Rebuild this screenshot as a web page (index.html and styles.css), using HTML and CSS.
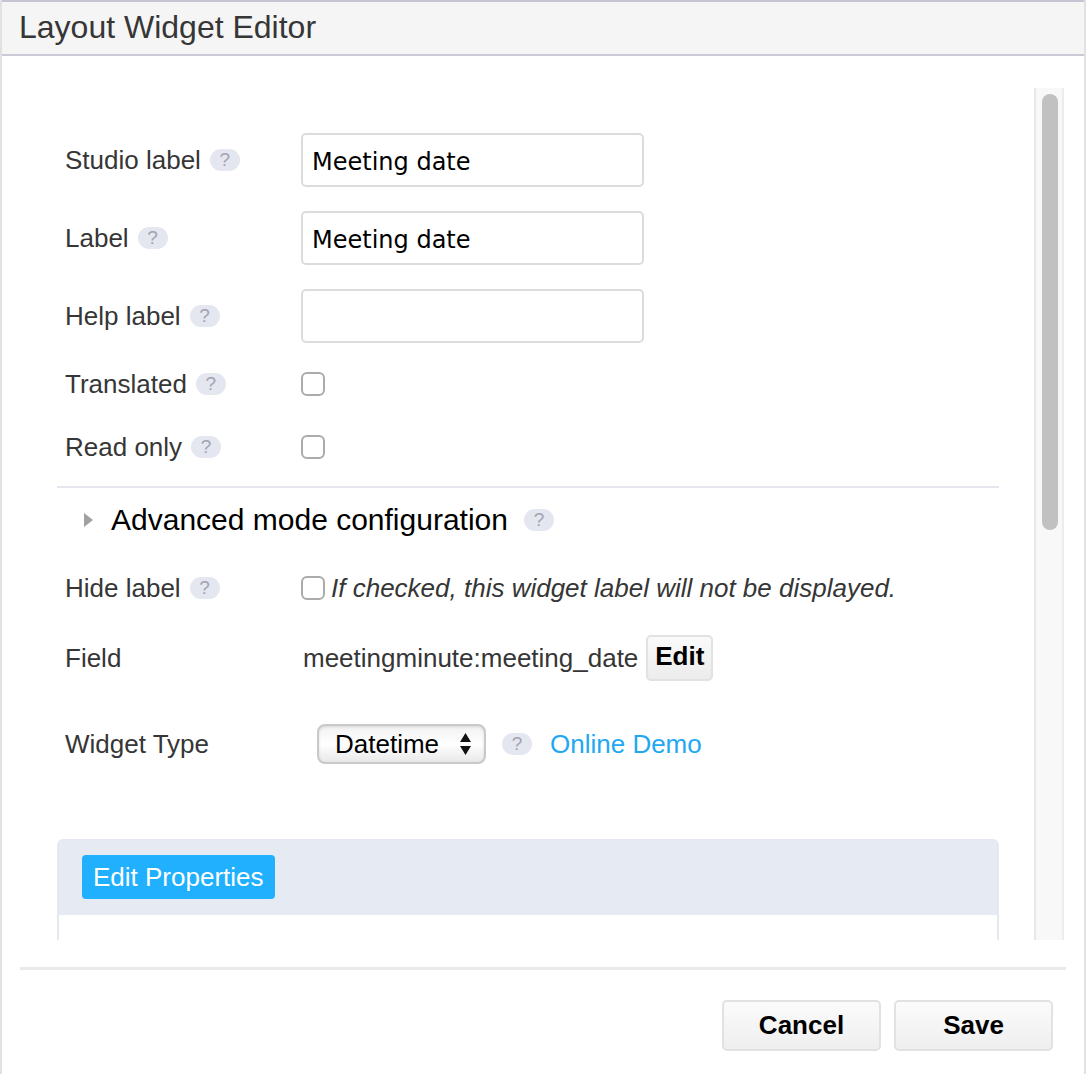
FILE: index.html
```html
<!DOCTYPE html>
<html>
<head>
<meta charset="utf-8">
<link rel="stylesheet" href="styles.css">
</head>
<body>
<div class="modal">
  <div class="modal-header"><h1 class="title">Layout Widget Editor</h1></div>
  <div class="modal-body">
    <div class="scroll-content">
      <div class="row row-input">
        <div class="lbl">Studio label <span class="help">?</span></div>
        <div class="input">Meeting date</div>
      </div>
      <div class="row row-input gap24">
        <div class="lbl">Label <span class="help">?</span></div>
        <div class="input">Meeting date</div>
      </div>
      <div class="row row-input gap24">
        <div class="lbl">Help label <span class="help">?</span></div>
        <div class="input"></div>
      </div>
      <div class="row row-check r-translated">
        <div class="lbl">Translated <span class="help">?</span></div>
        <span class="checkbox"></span>
      </div>
      <div class="row row-check r-readonly">
        <div class="lbl">Read only <span class="help">?</span></div>
        <span class="checkbox"></span>
      </div>
      <div class="divider"></div>
      <div class="advanced">
        <span class="caret"></span>
        <span class="adv-text">Advanced mode configuration</span>
        <span class="help">?</span>
      </div>
      <div class="row row-check r-hide">
        <div class="lbl">Hide label <span class="help">?</span></div>
        <span class="checkbox"></span>
        <span class="hint">If checked, this widget label will not be displayed.</span>
      </div>
      <div class="row r-field">
        <div class="lbl">Field</div>
        <span class="field-value">meetingminute:meeting_date</span>
        <span class="btn-edit">Edit</span>
      </div>
      <div class="row r-widget">
        <div class="lbl">Widget Type</div>
        <div class="select">
          <span class="select-text">Datetime</span>
          <svg class="select-arrows" width="13" height="24" viewBox="0 0 13 24"><path d="M6.5 1 L12 10 L1 10 Z" fill="#111"/><path d="M1 14 L12 14 L6.5 23 Z" fill="#111"/></svg>
        </div>
        <span class="help help-widget">?</span>
        <span class="link">Online Demo</span>
      </div>
      <div class="panel">
        <div class="panel-head"><span class="btn-blue">Edit Properties</span></div>
        <div class="panel-body"></div>
      </div>
    </div>
    <div class="scrollbar"><div class="thumb"></div></div>
  </div>
  <div class="modal-footer">
    <span class="btn">Cancel</span>
    <span class="btn">Save</span>
  </div>
</div>
</body>
</html>
```
FILE: styles.css
```css
html, body {
  margin: 0;
  padding: 0;
}
body {
  background: #e1e1e3;
  font-family: "Liberation Sans", Arial, sans-serif;
  width: 1086px;
  height: 1074px;
  overflow: hidden;
}
.modal {
  margin: 0 2px;
  width: 1082px;
  height: 1074px;
  background: #fff;
  border-top: 2px solid #c6c4d2;
  box-sizing: border-box;
  display: flex;
  flex-direction: column;
}
.modal-header {
  height: 54px;
  background: #f5f5f5;
  border-bottom: 2px solid #cbc9d6;
  box-sizing: border-box;
  display: flex;
  align-items: center;
  padding-left: 17px;
}
.title {
  margin: 0;
  font-weight: normal;
  font-size: 32px;
  color: #363636;
  position: relative;
  top: -1px;
}
.modal-body {
  display: flex;
  margin-top: 32px;
  height: 852px;
}
.scroll-content {
  width: 942px;
  margin-left: 55px;
  padding-top: 45px;
  overflow: hidden;
  height: 852px;
  box-sizing: border-box;
}
.row {
  display: flex;
  align-items: center;
}
.lbl {
  width: 244px;
  padding-left: 8px;
  box-sizing: border-box;
  font-size: 26px;
  color: #363636;
  display: flex;
  align-items: center;
  flex-shrink: 0;
}
.help {
  display: inline-flex;
  align-items: center;
  justify-content: center;
  width: 30px;
  height: 22px;
  border-radius: 11px;
  background: #e4e7f0;
  color: #a3a3b0;
  font-size: 19px;
  margin-left: 9px;
}
.row-input {
  height: 54px;
}
.gap24 {
  margin-top: 24px;
}
.input {
  width: 343px;
  height: 54px;
  box-sizing: border-box;
  border: 2px solid #dcdcdc;
  border-radius: 5px;
  padding: 3px 0 0 9px;
  display: flex;
  align-items: center;
  font-family: "DejaVu Sans", sans-serif;
  font-size: 24px;
  color: #000;
}
.row-check {
  height: 34px;
}
.r-translated { margin-top: 24px; }
.r-readonly { margin-top: 29px; }
.checkbox {
  width: 24px;
  height: 24px;
  box-sizing: border-box;
  border: 2px solid #ababab;
  border-radius: 6px;
  background: #fff;
  flex-shrink: 0;
}
.divider {
  margin-top: 22px;
  height: 2px;
  background: #e6e6ee;
}
.advanced {
  margin-top: 12px;
  height: 40px;
  display: flex;
  align-items: center;
  padding-left: 27px;
}
.caret {
  width: 0;
  height: 0;
  border-top: 7px solid transparent;
  border-bottom: 7px solid transparent;
  border-left: 9px solid #a0a0a0;
  margin-right: 18px;
}
.adv-text {
  font-size: 30px;
  color: #000;
}
.advanced .help {
  margin-left: 16px;
}
.r-hide {
  margin-top: 31px;
}
.hint {
  font-style: italic;
  font-size: 26px;
  color: #363636;
  margin-left: 6px;
  white-space: nowrap;
}
.r-field {
  margin-top: 30px;
  height: 46px;
}
.field-value {
  font-size: 26px;
  color: #363636;
  margin-left: 2px;
}
.btn-edit {
  margin-left: 8px;
  width: 67px;
  height: 46px;
  box-sizing: border-box;
  border: 2px solid #e2e2e2;
  border-radius: 5px;
  background: linear-gradient(#fafafa, #ececec);
  display: flex;
  align-items: center;
  justify-content: center;
  font-weight: bold;
  font-size: 26px;
  color: #000;
  padding-bottom: 4px;
}
.r-widget {
  margin-top: 43px;
  height: 40px;
}
.select {
  margin-left: 16px;
  width: 169px;
  height: 40px;
  box-sizing: border-box;
  border: 2px solid #c9c9c9;
  border-radius: 8px;
  background: linear-gradient(#f2f2f2, #ffffff 50%, #e9e9e9);
  box-shadow: inset 0 1px 3px rgba(0,0,0,0.12);
  display: flex;
  align-items: center;
  padding-left: 16px;
  padding-right: 12px;
  justify-content: space-between;
}
.select-text {
  font-size: 26px;
  color: #000;
}
.help-widget {
  margin-left: 16px;
}
.link {
  margin-left: 18px;
  font-size: 26px;
  color: #22a8f2;
}
.panel {
  margin-top: 75px;
  border: 2px solid #e4e8f0;
  border-bottom: none;
  border-radius: 6px 6px 0 0;
}
.panel-head {
  background: #e6eaf2;
  height: 74px;
  padding: 14px 0 0 23px;
  box-sizing: border-box;
}
.btn-blue {
  display: inline-flex;
  align-items: center;
  height: 44px;
  padding: 0 11px;
  background: #20b0fd;
  border-radius: 4px;
  color: #fff;
  font-size: 26px;
}
.panel-body {
  height: 200px;
  background: #fff;
}
.scrollbar {
  margin-left: 35px;
  width: 30px;
  height: 852px;
  box-sizing: border-box;
  background: #f8f8f8;
  border-left: 2px solid #e8e8e8;
  border-right: 2px solid #ececec;
  padding: 6px 0 0 6px;
}
.thumb {
  width: 16px;
  height: 436px;
  border-radius: 8px;
  background: #c1c1c1;
}
.modal-footer {
  margin: 27px 18px 0;
  border-top: 3px solid #e9e9ec;
  display: flex;
  justify-content: flex-end;
  gap: 13px;
  padding-top: 30px;
  padding-right: 13px;
}
.btn {
  width: 159px;
  height: 51px;
  box-sizing: border-box;
  border: 2px solid #e2e2e4;
  border-radius: 5px;
  background: linear-gradient(#fbfbfb, #efefef);
  display: flex;
  align-items: center;
  justify-content: center;
  font-weight: bold;
  font-size: 26px;
  color: #000;
}
```
